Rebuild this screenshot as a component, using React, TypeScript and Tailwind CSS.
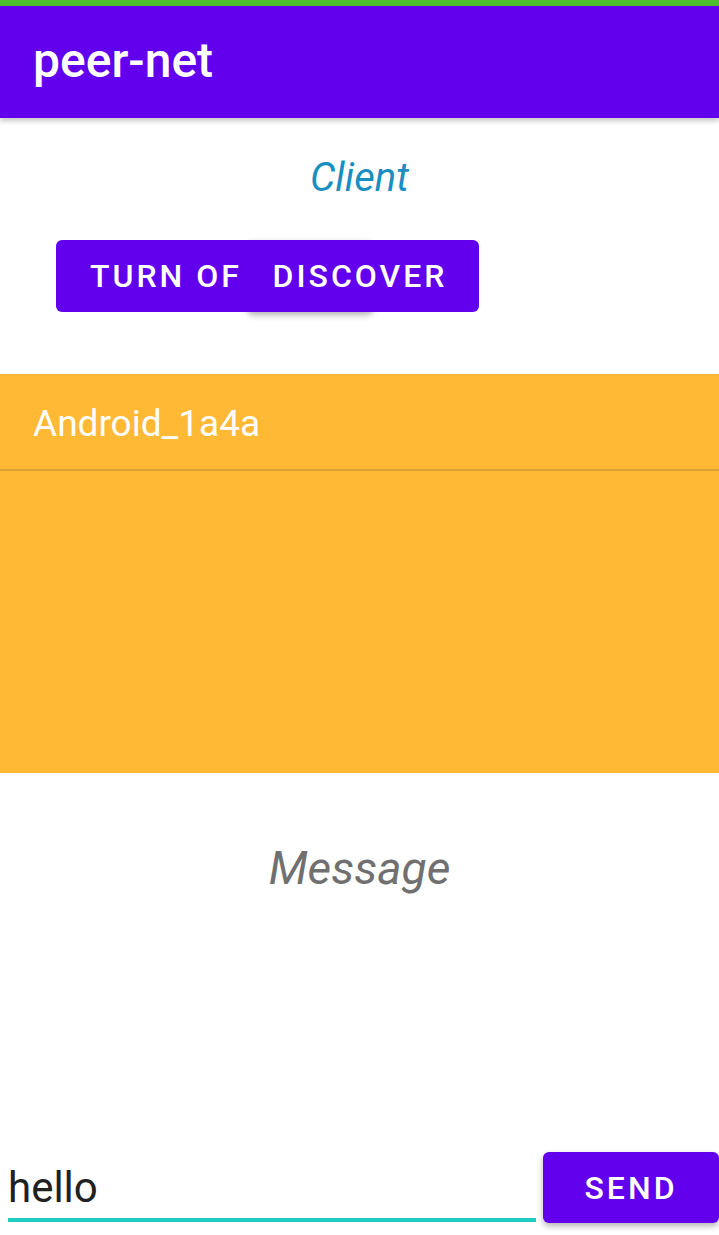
export default function App() {
  return (
    <div className="w-[719px] h-[1235px] overflow-hidden bg-white font-['Roboto',sans-serif] flex flex-col">
      {/* status strip */}
      <div className="h-[6px] bg-[#4fbe2c]" />

      {/* app bar */}
      <header className="relative z-10 h-[112px] bg-[#6200ee] flex items-center pl-[33px] shadow-[0_3px_5px_rgba(0,0,0,0.22)]">
        <h1 className="text-[48px] font-medium text-white leading-none pb-[2px]">peer-net</h1>
      </header>

      <p className="mt-[36px] text-center text-[40px] leading-[48px] italic text-[#1a8fbf]">Client</p>

      {/* overlapping buttons */}
      <div className="relative ml-[56px] mt-[38px] w-[423px] h-[72px]">
        <div className="absolute left-[191px] top-0 w-[126px] h-[72px] rounded-md shadow-[0_3px_6px_rgba(0,0,0,0.3)]" />
        <button className="absolute left-0 top-0 w-[317px] h-[72px] rounded-md bg-[#6200ee] text-left pl-[34px] text-[32px] font-medium tracking-[3px] text-white">
          TURN OF
        </button>
        <button className="absolute left-[191px] top-0 right-0 h-[72px] pr-[6px] rounded-md bg-[#6200ee] text-center text-[32px] font-medium tracking-[3px] text-white">
          DISCOVER
        </button>
      </div>

      {/* peers list */}
      <div className="mt-[62px] h-[399px] bg-[#ffb935]">
        <div className="h-[97px] flex items-center pl-[33px] pt-[4px] border-b-2 border-[#d9a12f]">
          <span className="text-[37px] text-white leading-none">Android_1a4a</span>
        </div>
      </div>

      <p className="mt-[67px] text-center text-[46px] leading-[56px] italic text-[#707070]">Message</p>

      {/* compose row */}
      <div className="mt-[256px] flex items-end h-[71px]">
        <div className="ml-[8px] w-[529px] h-[71px] flex flex-col justify-end pb-[1px]">
          <span className="text-[42px] leading-[50px] text-[#212121]">hello</span>
          <div className="mt-[5px] h-[4px] bg-[#1fcdc0]" />
        </div>
        <button className="ml-[7px] w-[176px] h-[71px] shrink-0 rounded-md bg-[#6200ee] text-[32px] font-medium tracking-[3px] text-white shadow-[0_3px_6px_rgba(0,0,0,0.3)]">
          SEND
        </button>
      </div>
    </div>
  );
}
